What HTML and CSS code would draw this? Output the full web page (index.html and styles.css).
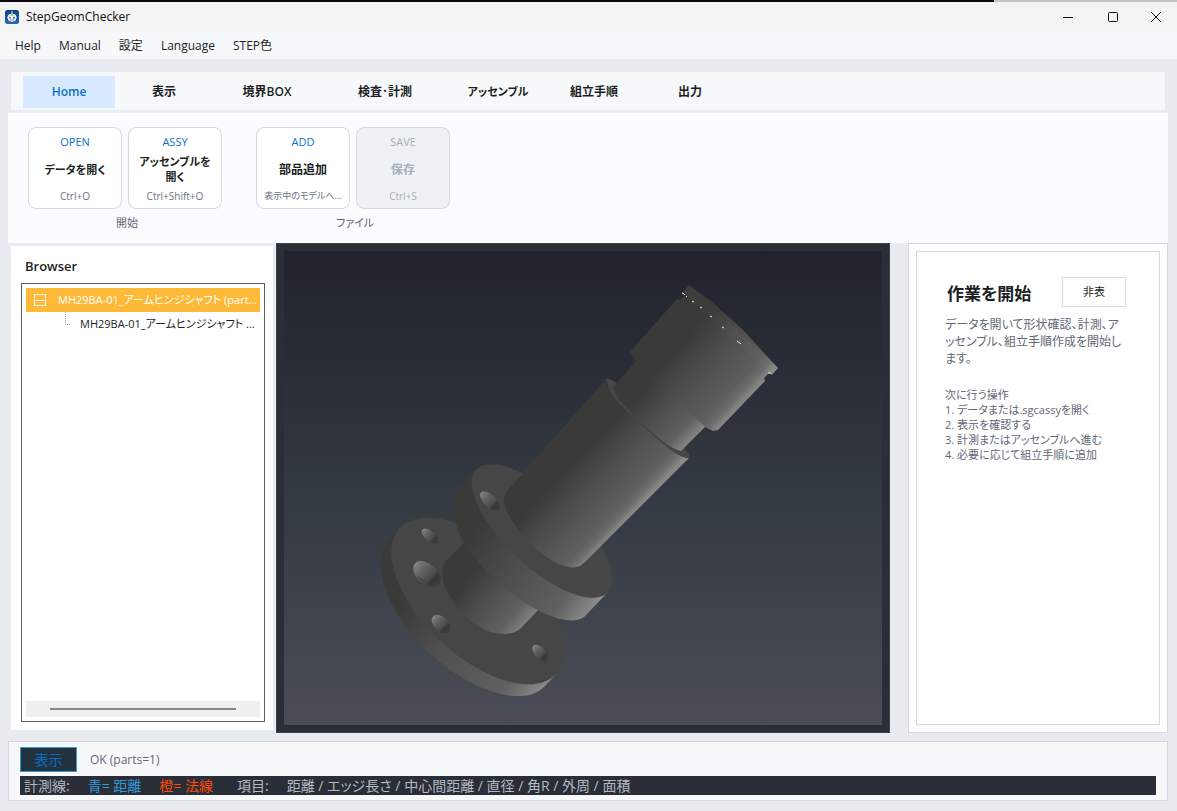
FILE: index.html
```html
<!DOCTYPE html>
<html lang="ja">
<head>
<meta charset="utf-8">
<title>StepGeomChecker</title>
<link rel="stylesheet" href="styles.css">
</head>
<body>
<header class="titlebar">
  <svg class="app-icon" viewBox="0 0 14 14" aria-hidden="true">
    <defs><linearGradient id="appBlue" x1="0" y1="0" x2="0" y2="1"><stop offset="0" stop-color="#123f86"/><stop offset="1" stop-color="#2a69b4"/></linearGradient></defs>
    <rect width="14" height="14" rx="2.5" fill="url(#appBlue)"/>
    <path d="M7 1v3" stroke="#7bbf5a" stroke-width="1.6"/>
    <path d="M3.6 4.5 7 3.4l3.4 1.1 1.2 2.7-1 3.2L7 12l-3.6-1.6-1-3.2z" fill="#e9f1fa"/>
    <path d="M5.6 4.2h2.8v1.4H5.6z" fill="#8dbd80"/>
    <circle cx="5" cy="7.8" r="1" fill="#d6493d"/><circle cx="9" cy="7.8" r="1" fill="#2b5d9f"/>
    <path d="M5 10h4" stroke="#5b87bd" stroke-width=".9"/>
  </svg>
  <span class="app-name">StepGeomChecker</span>
  <div class="window-controls">
    <button aria-label="Minimize"><svg viewBox="0 0 12 12"><path d="M1 6.5h10" /></svg></button>
    <button aria-label="Maximize"><svg viewBox="0 0 12 12"><rect x="1.5" y="1.5" width="9" height="9" rx="1"/></svg></button>
    <button aria-label="Close"><svg viewBox="0 0 12 12"><path d="M1 1l10 10M11 1L1 11"/></svg></button>
  </div>
</header>
<nav class="menubar">
  <button>Help</button><button>Manual</button><button>設定</button><button>Language</button><button>STEP色</button>
</nav>
<div class="workspace">
  <nav class="tabs">
    <button class="active">Home</button><button>表示</button><button>境界BOX</button><button>検査･計測</button><button class="kana">アッセンブル</button><button>組立手順</button><button>出力</button>
  </nav>
  <section class="ribbon">
    <div class="group">
      <div class="cards">
        <button class="card"><span class="tag">OPEN</span><span class="name kana">データを開く</span><span class="hint">Ctrl+O</span></button>
        <button class="card"><span class="tag">ASSY</span><span class="name kana">アッセンブルを<br>開く</span><span class="hint">Ctrl+Shift+O</span></button>
      </div>
      <div class="group-label">開始</div>
    </div>
    <div class="group">
      <div class="cards">
        <button class="card"><span class="tag">ADD</span><span class="name">部品追加</span><span class="hint long">表示中のモデルへ...</span></button>
        <button class="card" disabled><span class="tag">SAVE</span><span class="name">保存</span><span class="hint">Ctrl+S</span></button>
      </div>
      <div class="group-label">ファイル</div>
    </div>
  </section>
  <main class="main">
    <section class="browser">
      <h2>Browser</h2>
      <div class="tree">
        <ul>
          <li class="node selected"><button class="toggle" aria-label="Collapse"></button><span>MH29BA-01_アームヒンジシャフト (part...</span></li>
          <li class="node child"><i class="branch"></i><span>MH29BA-01_アームヒンジシャフト ...</span></li>
        </ul>
        <div class="scroll"><div class="thumb"></div></div>
      </div>
    </section>
    <section class="viewer">
      <div class="canvas">
        <svg class="model" viewBox="284 251 598 474" role="img" aria-label="Hinge shaft">
          <defs>
            <linearGradient id="body" gradientUnits="userSpaceOnUse" x1="556" y1="435" x2="636" y2="510"><stop offset=".3" stop-color="#3a3a39"/><stop offset=".5" stop-color="#4a4a4b"/><stop offset=".86" stop-color="#5f5f60"/><stop offset=".93" stop-color="#6c6c6d"/><stop offset="1" stop-color="#8a8a8a"/></linearGradient>
            <linearGradient id="neck" gradientUnits="userSpaceOnUse" x1="625" y1="374" x2="693" y2="439"><stop offset=".26" stop-color="#3a3a39"/><stop offset=".5" stop-color="#4a4a4b"/><stop offset=".85" stop-color="#606061"/><stop offset="1" stop-color="#858585"/></linearGradient>
            <linearGradient id="head" gradientUnits="userSpaceOnUse" x1="655" y1="325" x2="740" y2="404"><stop offset=".28" stop-color="#3a3a39"/><stop offset=".5" stop-color="#4a4a4b"/><stop offset=".86" stop-color="#5e5e5f"/><stop offset=".94" stop-color="#6c6c6d"/><stop offset="1" stop-color="#858585"/></linearGradient>
            <linearGradient id="rimA" gradientUnits="userSpaceOnUse" x1="454" y1="493" x2="597" y2="603"><stop offset=".22" stop-color="#3a3a39"/><stop offset=".5" stop-color="#4c4c4d"/><stop offset=".84" stop-color="#606061"/><stop offset="1" stop-color="#8a8a8a"/></linearGradient>
            <linearGradient id="rimB" gradientUnits="userSpaceOnUse" x1="389" y1="540" x2="551" y2="680"><stop offset=".25" stop-color="#3a3a39"/><stop offset=".5" stop-color="#4f4f50"/><stop offset=".86" stop-color="#606061"/><stop offset="1" stop-color="#8a8a8a"/></linearGradient>
            <linearGradient id="hub" gradientUnits="userSpaceOnUse" x1="452" y1="556" x2="529" y2="620"><stop offset=".28" stop-color="#3a3a39"/><stop offset=".52" stop-color="#4c4c4d"/><stop offset=".84" stop-color="#606061"/><stop offset="1" stop-color="#808080"/></linearGradient>
            <linearGradient id="hole" x1="0" y1="0" x2="1" y2="0"><stop offset="0" stop-color="#858585"/><stop offset=".3" stop-color="#646464"/><stop offset=".65" stop-color="#4b4b4b"/><stop offset=".75" stop-color="#383838"/><stop offset="1" stop-color="#3c3c3b"/></linearGradient>
          </defs>
          <path fill="url(#rimB)" d="M400 528 387 542A107 55 43 0 0 543 688L556 674Z"/>
          <ellipse cx="478" cy="601" rx="107" ry="55" transform="rotate(43 478 601)" fill="#464647"/>
          <path fill="url(#hub)" d="M470 536 445 562Q441 568 443 580C446 592 455 606 464 615C476 627 490 634 505 634Q515 634 521 628L540 608 500 560Z"/>
          <path fill="url(#rimA)" d="M477 470 455 493C451 500 453 515 459 534A90 36 43 0 0 587 614L608 592Z"/>
          <ellipse cx="542" cy="531" rx="90" ry="36" transform="rotate(43 542 531)" fill="#464647"/>
          <path fill="#464647" d="M606 379Q610 378 618 384L683 447Q692 455 689 458L680 460 612 400Z"/>
          <path fill="url(#body)" d="M606 379 508 490C503 495 503 501 506 509C513 526 527 542 545 556C558 565 571 570 580 566L586 561 689 458C681 459 665 447 647 430C630 416 604 391 606 379Z"/>
          <path fill="url(#neck)" d="M613 388 636 361 652 364 705 420V427L681 451C672 449 662 441 650 430C637 418 618 402 613 388Z"/>
          <path fill="url(#head)" d="M630 352 677 299 680 300 684 296 682 293 689 285 712 302 742 329 778 368 772 375 769 373 764 378 765 381 718 430 713 431 705 427 680 403 636 361Z"/>
          <path fill="#ffffff" fill-opacity=".02" d="M682 293 689 285 778 368 772 375Z"/>
          <path fill="none" stroke="#e7e7e7" stroke-width="1" d="M683 293l2 2M686 296l1 1M692 301l2 1M700 307l2 1M710 316l2 1M722 327l2 1M737 341l4 3M768 373h3M682 293l2 1"/>
          <g fill="url(#hole)">
            <ellipse cx="430" cy="536" rx="10" ry="5" transform="rotate(40 430 536)"/>
            <ellipse cx="427" cy="574" rx="16" ry="10" transform="rotate(41 427 574)"/>
            <ellipse cx="441" cy="624" rx="11" ry="7" transform="rotate(44 441 624)"/>
            <ellipse cx="540" cy="653" rx="10" ry="5.5" transform="rotate(48 540 653)"/>
            <ellipse cx="490" cy="501" rx="12.500" ry="6" transform="rotate(43 490 501)"/>
          </g>
          <path fill="#3c4854" d="M417 576l7 4 4 5-7-4z"/>
        </svg>
      </div>
    </section>
    <aside class="guide">
      <div class="guide-card">
        <div class="guide-head"><h1>作業を開始</h1><button>非表</button></div>
        <p class="lead">データを開いて形状確認、計測、ア<br>ッセンブル、組立手順作成を開始し<br>ます。</p>
        <p class="steps">次に行う操作<br>1. データまたは.sgcassyを開く<br>2. 表示を確認する<br>3. 計測またはアッセンブルへ進む<br>4. 必要に応じて組立手順に追加</p>
      </div>
    </aside>
  </main>
  <footer class="status">
    <div class="status-row"><button>表示</button><span>OK (parts=1)</span></div>
    <div class="legend"><span>計測線:</span><span class="blue">青= 距離</span><span class="orange">橙= 法線</span><span class="items">項目:</span><span>距離 / エッジ長さ / 中心間距離 / 直径 / 角R / 外周 / 面積</span></div>
  </footer>
</div>
</body>
</html>
```
FILE: styles.css
```css
* { box-sizing: border-box; }
body {
  margin: 0;
  min-height: 100vh;
  display: flex;
  flex-direction: column;
  background: #e8ebf0;
  color: #1b1f24;
  font: 12px/16px "Open Sans", "Noto Sans CJK JP", sans-serif;
  font-feature-settings: "palt";
}
button {
  margin: 0;
  padding: 0;
  border: 0;
  background: none;
  color: inherit;
  font: inherit;
  font-feature-settings: inherit;
}
h1, h2, p, ul { margin: 0; padding: 0; }

.titlebar {
  height: 32px;
  display: flex;
  align-items: center;
  padding-left: 5px;
  gap: 7px;
  background: #f3f3f3;
  border-top: 2px solid;
  border-image: linear-gradient(90deg, #0b0708 84.3%, #c4c4c4 84.3%) 2;
  color: #111;
}
.app-icon { width: 14px; height: 14px; }
.window-controls { margin-left: auto; display: flex; }
.window-controls button { width: 45px; height: 28px; display: grid; place-items: center; }
.window-controls button:last-child { width: 42px; }
.window-controls svg { width: 12px; height: 12px; fill: none; stroke: #111; stroke-width: 1; }

.menubar {
  height: 27px;
  display: flex;
  align-items: center;
  gap: 18px;
  padding-left: 15px;
  background: #f7f8fa;
}

.workspace {
  flex: 1;
  display: flex;
  flex-direction: column;
  padding: 13px 9px 10px 8px;
}
.tabs {
  height: 38px;
  margin: 0 3px 3px;
  padding: 4px 12px 2px;
  display: grid;
  grid-template-columns: 92px 92px 108px 122px 98px 88px 98px;
  column-gap: 3px;
  background: #f7f8fa;
  font-weight: 600;
}
.tabs .active { background: #d8eaff; color: #0a6fc9; }

.ribbon {
  height: 130px;
  padding: 14px 20px;
  display: flex;
  gap: 34px;
  background: #fbfcfe;
}
.cards { display: flex; gap: 6px; }
.card {
  width: 94px;
  height: 82px;
  padding: 6px 4px 4px;
  display: flex;
  flex-direction: column;
  align-items: center;
  border: 1px solid #d3d9e4;
  border-radius: 8px;
  background: #fff;
  white-space: nowrap;
}
.tag { color: #0a6fc9; font-size: 11px; font-weight: 500; }
.name { flex: 1; display: grid; place-items: center; font-weight: 600; line-height: 15px; }
.kana { font-size: 11px; }
.hint { color: #6b7482; font-size: 10px; }
.hint.long { font-size: 9px; }
.card:disabled { background: #eef1f6; }
.card:disabled span { color: #a7afba; }
.group-label { margin-top: 6px; padding-left: 4px; text-align: center; color: #5f6875; font-size: 11px; }

.main { flex: 1; display: flex; }
.browser {
  width: 262px;
  margin: 3px;
  padding: 10px 8px 8px 10px;
  display: flex;
  flex-direction: column;
  background: #fff;
}
.browser h2 { padding-left: 4px; font-size: 13px; line-height: 20px; font-weight: 600; }
.tree {
  flex: 1;
  margin-top: 7px;
  padding: 4px;
  display: flex;
  flex-direction: column;
  border: 1px solid #5f5f5f;
}
.tree ul { list-style: none; }
.node {
  height: 24px;
  display: flex;
  align-items: center;
  white-space: nowrap;
  font-size: 11px;
}
.selected { background: #ffb938; color: #fff; padding-left: 8px; gap: 12px; }
.toggle {
  flex: none;
  width: 12px;
  height: 12px;
  border: 1px solid #fff;
  display: grid;
  place-items: center;
}
.toggle::before { content: ""; width: 8px; height: 1px; background: #fff; }
.child { padding-left: 39px; gap: 10px; }
.branch { flex: none; width: 5px; height: 13px; align-self: flex-start; border: 1px dotted #aaa; border-width: 0 0 1px 1px; }
.scroll { margin-top: auto; height: 16px; padding: 7px 24px; background: #f0f0f0; }
.thumb { height: 2px; background: #858585; }

.viewer {
  flex: 1;
  padding: 7px;
  display: flex;
  background: #2a2e36;
  border: 1px solid #3a4350;
}
.canvas { flex: 1; display: flex; background: linear-gradient(#20232b, #343a42 52%, #4a4d56); }
.model { width: 100%; height: 100%; display: block; }

.guide { width: 260px; margin-left: 18px; padding: 7px; display: flex; background: #fff; border: 1px solid #d3d9e4; }
.guide-card { flex: 1; min-width: 0; padding: 25px 28px; border: 1px solid #d3d9e4; color: #5f6875; white-space: nowrap; }
.guide-head { display: flex; align-items: center; justify-content: space-between; padding: 0 5px 0 2px; color: #1b1f24; }
.guide-head h1 { padding-top: 4px; font-size: 17px; line-height: 24px; font-weight: 600; }
.guide-head button { width: 64px; height: 30px; border: 1px solid #d3d9e4; font-size: 11px; }
.lead { margin-top: 9px; line-height: 17px; }
.steps { margin-top: 20px; font-size: 11px; line-height: 15px; }

.status { margin-top: 8px; padding: 5px 11px; background: #f7f8fa; border: 1px solid #d3d9e4; }
.status-row { display: flex; align-items: center; gap: 13px; color: #5f6875; }
.status-row button { width: 57px; height: 25px; background: #22323f; border: 1px solid #3598db; color: #0a6fc9; font-size: 14px; }
.legend {
  height: 19px;
  margin-top: 4px;
  padding-left: 4px;
  display: flex;
  align-items: center;
  gap: 18px;
  background: #2a2e36;
  color: #b4bac3;
  font-size: 14px;
  white-space: nowrap;
}
.blue { color: #3598db; }
.orange { color: #ff4a0a; }
.items { margin-left: 6px; }
```
